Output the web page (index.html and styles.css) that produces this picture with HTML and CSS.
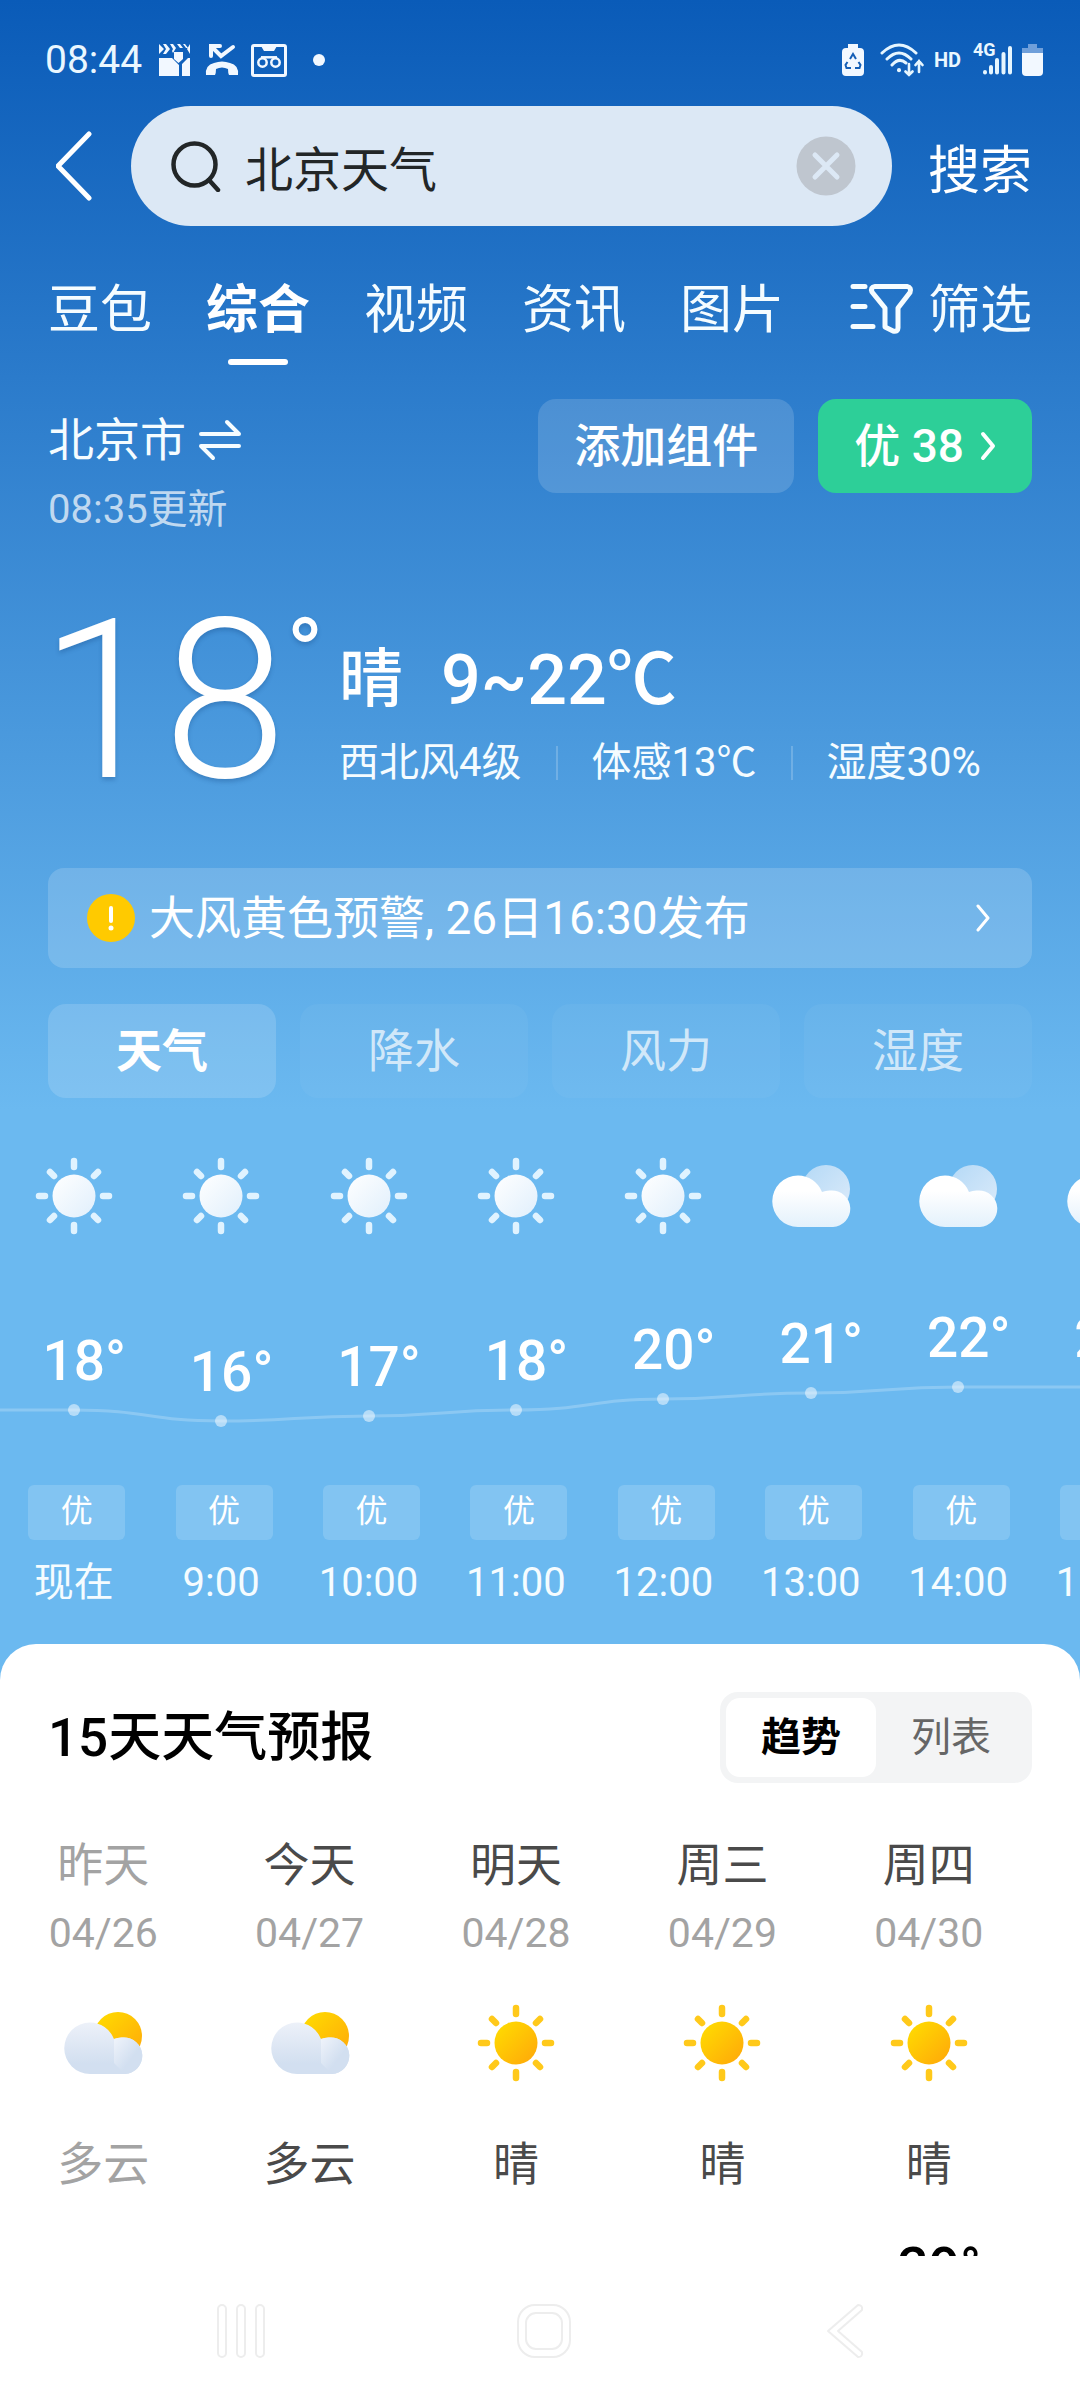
FILE: index.html
```html
<!DOCTYPE html>
<html lang="zh-CN">
<head>
<meta charset="utf-8">
<meta name="viewport" content="width=device-width, initial-scale=1">
<title>北京天气</title>
<link rel="stylesheet" href="styles.css">
</head>
<body>
<svg class="defs" aria-hidden="true">
  <defs>
    <linearGradient id="g-white" x1="0" y1="0" x2="1" y2="1"><stop offset="0" stop-color="#fff"/><stop offset="1" stop-color="#e0effc"/></linearGradient>
    <linearGradient id="g-cloud" x1="0" y1="0" x2="0" y2="1"><stop offset="0.3" stop-color="#fff"/><stop offset="1" stop-color="#e3f1fc"/></linearGradient>
    <linearGradient id="g-back" x1="0" y1="0" x2="1" y2="1"><stop offset="0" stop-color="#b4d9f6"/><stop offset="1" stop-color="#dcebfa"/></linearGradient>
    <linearGradient id="g-sun" x1="0" y1="0" x2="1" y2="1"><stop offset="0" stop-color="#ffdf00"/><stop offset="1" stop-color="#ffa60a"/></linearGradient>
    <linearGradient id="g-grey" x1="0" y1="0" x2="0" y2="1"><stop offset="0" stop-color="#edf1f9"/><stop offset="0.8" stop-color="#d2dff0"/></linearGradient>
    <linearGradient id="g-puff" x1="0" y1="0" x2="1" y2="1"><stop offset="0" stop-color="#f0f4fb"/><stop offset="0.6" stop-color="#d2dff0"/></linearGradient>
    <symbol id="sun" viewBox="0 0 80 80">
      <circle cx="40" cy="40" r="21.5" fill="var(--disc)"/>
      <g stroke="var(--ray)" stroke-width="6.5" stroke-linecap="round">
        <path d="M40 5v6M40 69v6M5 40h6M69 40h6M16 16l4 4M60 60l4 4M16 64l4-4M60 20l4-4"/>
      </g>
    </symbol>
    <symbol id="cloudy" viewBox="0 0 80 80">
      <circle cx="55" cy="33" r="24" fill="var(--disc)"/>
      <path d="M27 19.500A26 26 0 0 1 51 36A19 19 0 0 1 60 34.500A18 18 0 0 1 62 71H27A25.700 25.700 0 0 1 27 19.500Z" fill="var(--cloud)"/>
      <path d="M51 60V36A19 19 0 0 1 60 34.500A18 18 0 0 1 62 71Z" fill="var(--puff)"/>
    </symbol>
  </defs>
</svg>

<div class="screen">
  <div class="status">
    <time class="clock">08:44</time>
    <svg width="31" height="32" viewBox="0 0 31 32" fill="#f2f8ff"><path d="M0 14H13L20 21V32H0ZM31 14V32H23V20L29 14ZM15 8h9v7l-4.500 4L15 15ZM0 0l5 5-5 5ZM4 0h3l4 5-4 5H4l3-5ZM11 0h3l3 4-3 5-1-2 1-2ZM18 0h3l3 4h-3ZM24 0h2l3 4h-2ZM31 0v10l-3-5Z"/></svg>
    <svg class="call" width="34" height="32" viewBox="0 0 34 32" fill="none" stroke="#f2f8ff" stroke-linecap="round"><path d="M6 12V2h9M7 3l9 9L28 3" stroke-width="4"/><path d="M1 31Q0 21 9 19Q17 16 25 19Q34 21 33 31H24Q23 29 23 25Q17 22 11 25Q11 29 10 31Z" fill="#f2f8ff" stroke="none"/></svg>
    <svg width="36" height="33" viewBox="0 0 36 33" fill="none" stroke="#f2f8ff"><rect x="1.500" y="1.500" width="33" height="30" rx="1.500" stroke-width="3"/><path d="M10 2h16l-3 5H13Z" fill="#f2f8ff" stroke="none"/><g stroke-width="2.500"><circle cx="11.500" cy="18.500" r="4.200"/><circle cx="24.500" cy="18.500" r="4.200"/><path d="M10 13.300H26"/></g></svg>
    <span class="more-dot"></span>
    <div class="status-right">
      <svg width="22" height="33" viewBox="0 0 22 33"><path d="M6 0h10v4h2a4 4 0 0 1 4 4v20a4 4 0 0 1-4 4H4a4 4 0 0 1-4-4V8a4 4 0 0 1 4-4h2Z" fill="#f2f8ff"/><g fill="none" stroke="#155fb6" stroke-width="2"><path d="M8 15l3-5 3 5M5.500 18l-2 3 1 3H9M16.500 18l2 3-1 3H13"/></g></svg>
      <svg class="wifi" width="44" height="34" viewBox="0 0 44 34" fill="none" stroke="#e6f6ff" stroke-width="3" stroke-linecap="round"><path d="M2 10Q19-6 36 10M7 16Q19 4 31 16M12 22Q19 14 26 20"/><path d="M19 27v.2" stroke-width="4"/><path d="M29 21v11M25.500 28.500l3.500 3.500 3.500-3.500M39 29V18M35.500 22l3.500-4 3.500 4" stroke-width="2.600"/></svg>
      <span class="hd">HD</span>
      <span class="cell"><span class="gen">4G</span><svg width="30" height="30" viewBox="0 0 30 30" stroke="#e6f6ff" stroke-width="4" stroke-linecap="round"><path d="M3 27v.5M9 22v5.500M15 15v12.500M21.500 9v18.500M28 3v24.500"/></svg></span>
      <svg width="21" height="33" viewBox="0 0 21 33"><path d="M6 0h9v4h6v5H0V4h6Z" fill="#6f9fda"/><path d="M0 9H21V28a4 4 0 0 1-4 4H4a4 4 0 0 1-4-4Z" fill="#f2f8ff"/></svg>
    </div>
  </div>

  <form class="search" role="search">
    <button type="button" class="plain" aria-label="返回"><svg width="36" height="70" viewBox="0 0 36 70" fill="none" stroke="#fff" stroke-width="5" stroke-linecap="round" stroke-linejoin="round"><path d="M33 3 2 35 33 67"/></svg></button>
    <div class="search-box">
      <svg width="50" height="52" viewBox="0 0 50 52" fill="none" stroke="#222627" stroke-width="4.500" stroke-linecap="round"><circle cx="23.500" cy="24.500" r="21"/><path d="M38 40l9 10"/></svg>
      <input type="text" value="北京天气" aria-label="搜索">
      <button type="button" class="plain" aria-label="清除"><svg width="60" height="60" viewBox="0 0 60 60"><circle cx="30" cy="30" r="29.500" fill="#bfc6cf"/><path d="M19 19l22 22M41 19 19 41" stroke="#dce8f5" stroke-width="5" stroke-linecap="round"/></svg></button>
    </div>
    <button type="submit" class="plain go">搜索</button>
  </form>

  <nav class="tabs">
    <a href="#doubao">豆包</a>
    <a href="#all" class="on" aria-current="page">综合</a>
    <a href="#video">视频</a>
    <a href="#news">资讯</a>
    <a href="#images">图片</a>
    <button type="button" class="plain filter"><svg width="64" height="52" viewBox="0 0 64 52" fill="none" stroke="#f5fcff" stroke-width="5" stroke-linecap="round" stroke-linejoin="round"><path d="M3 3.500h12M3 23.500h12M3 43.500h20M25 3.500h32q5 1 3 6L48 25v20q0 4-5 3l-8-4V25L22 9q-2-5 3-5.500Z"/></svg>筛选</button>
  </nav>

  <section class="place">
    <div class="place-name">
      <a href="#city" class="city">北京市<svg width="44" height="42" viewBox="0 0 44 42" fill="none" stroke="#f5fcff" stroke-width="4" stroke-linecap="round" stroke-linejoin="round"><path d="M3 15H41L29 3M41 27H3L15 39"/></svg></a>
      <span class="updated">08:35更新</span>
    </div>
    <button type="button" class="chip">添加组件</button>
    <button type="button" class="chip good">优 38<svg width="16" height="30" viewBox="0 0 16 30" fill="none" stroke="#fff" stroke-width="4" stroke-linecap="round" stroke-linejoin="round"><path d="M3 3 13 15 3 27"/></svg></button>
  </section>

  <section class="now">
    <div class="now-temp">18<span class="now-deg">°</span></div>
    <div class="now-info">
      <p class="now-main"><span class="now-sky">晴</span><span>9~22℃</span></p>
      <p class="now-detail"><span>西北风4级</span><span>体感13℃</span><span>湿度30%</span></p>
    </div>
  </section>

  <a href="#alert" class="alert">
    <svg width="48" height="48" viewBox="0 0 48 48"><circle cx="24" cy="24" r="24" fill="#ffca00"/><path d="M24 14v13" stroke="#fff" stroke-width="4" stroke-linecap="round"/><circle cx="24" cy="34" r="2.500" fill="#fff"/></svg>
    <span>大风黄色预警, 26日16:30发布</span>
    <svg class="arrow" width="16" height="28" viewBox="0 0 16 28" fill="none" stroke="#fff" stroke-width="3" stroke-linecap="round" stroke-linejoin="round"><path d="M3 2 13 14 3 26"/></svg>
  </a>

  <div class="modes">
    <button type="button" class="mode on" aria-pressed="true">天气</button>
    <button type="button" class="mode">降水</button>
    <button type="button" class="mode">风力</button>
    <button type="button" class="mode">湿度</button>
  </div>

  <section class="hours">
    <svg class="curve" viewBox="0 0 1080 44" preserveAspectRatio="none" fill="none" stroke="#fff" stroke-opacity=".22" stroke-width="3"><path d="M0 28H74C148 28 148 39 221 39S295 34 369 34 442 28 516 28 590 17 663 17 737 11 811 11 884 5 958 5H1080"/></svg>
    <div class="hour"><svg class="sky"><use href="#sun"/></svg><div class="point" style="padding-top:23px"><span class="deg">18<i>°</i></span><b></b></div><span class="aqi">优</span><span class="at">现在</span></div>
    <div class="hour"><svg class="sky"><use href="#sun"/></svg><div class="point" style="padding-top:34px"><span class="deg">16<i>°</i></span><b></b></div><span class="aqi">优</span><span class="at">9:00</span></div>
    <div class="hour"><svg class="sky"><use href="#sun"/></svg><div class="point" style="padding-top:29px"><span class="deg">17<i>°</i></span><b></b></div><span class="aqi">优</span><span class="at">10:00</span></div>
    <div class="hour"><svg class="sky"><use href="#sun"/></svg><div class="point" style="padding-top:23px"><span class="deg">18<i>°</i></span><b></b></div><span class="aqi">优</span><span class="at">11:00</span></div>
    <div class="hour"><svg class="sky"><use href="#sun"/></svg><div class="point" style="padding-top:12px"><span class="deg">20<i>°</i></span><b></b></div><span class="aqi">优</span><span class="at">12:00</span></div>
    <div class="hour"><svg class="sky"><use href="#cloudy"/></svg><div class="point" style="padding-top:6px"><span class="deg">21<i>°</i></span><b></b></div><span class="aqi">优</span><span class="at">13:00</span></div>
    <div class="hour"><svg class="sky"><use href="#cloudy"/></svg><div class="point" style="padding-top:0px"><span class="deg">22<i>°</i></span><b></b></div><span class="aqi">优</span><span class="at">14:00</span></div>
    <div class="hour"><svg class="sky"><use href="#cloudy"/></svg><div class="point" style="padding-top:0px"><span class="deg">22<i>°</i></span><b></b></div><span class="aqi">优</span><span class="at">15:00</span></div>
  </section>

  <section class="forecast">
    <div class="forecast-head">
      <h2>15天天气预报</h2>
      <div class="segment"><button type="button" class="on" aria-pressed="true">趋势</button><button type="button">列表</button></div>
    </div>
    <div class="days">
      <div class="day past"><span>昨天</span><span class="date">04/26</span><svg class="sky"><use href="#cloudy"/></svg><span>多云</span></div>
      <div class="day"><span>今天</span><span class="date">04/27</span><svg class="sky"><use href="#cloudy"/></svg><span>多云</span></div>
      <div class="day"><span>明天</span><span class="date">04/28</span><svg class="sky"><use href="#sun"/></svg><span>晴</span></div>
      <div class="day"><span>周三</span><span class="date">04/29</span><svg class="sky"><use href="#sun"/></svg><span>晴</span></div>
      <div class="day"><span>周四</span><span class="date">04/30</span><svg class="sky"><use href="#sun"/></svg><span>晴</span><span class="high">29<i>°</i></span></div>
    </div>
  </section>

  <div class="navbar">
    <button type="button" class="plain" aria-label="最近任务"><svg width="56" height="56" viewBox="0 0 56 56" fill="#fff" stroke="#ededed" stroke-width="2"><rect x="4" y="2" width="8" height="52" rx="4"/><rect x="23" y="2" width="8" height="52" rx="4"/><rect x="42" y="2" width="8" height="52" rx="4"/></svg></button>
    <button type="button" class="plain" aria-label="主屏幕"><svg width="56" height="56" viewBox="0 0 56 56" fill="#fff" stroke="#ededed" stroke-width="2"><rect x="2" y="2" width="52" height="52" rx="17"/><rect x="10" y="10" width="36" height="36" rx="10"/></svg></button>
    <button type="button" class="plain" aria-label="返回"><svg width="56" height="56" viewBox="0 0 56 56" fill="#fff" stroke="#ededed" stroke-width="2" stroke-linejoin="round"><path d="M40 2 10 28 40 54q5 0 4-5L20 28 44 7q1-5-4-5Z"/></svg></button>
  </div>
</div>
</body>
</html>
```
FILE: styles.css
```css
* { box-sizing: border-box; }

body {
  margin: 0;
  font-family: Roboto, "Noto Sans CJK SC", sans-serif;
  font-size: 46px;
  line-height: 56px;
  color: #fff;
}

p, h2 { margin: 0; }
i, b { font-style: normal; }
a { color: inherit; text-decoration: none; }
svg { display: block; flex: none; }
button { font: inherit; color: inherit; border: 0; padding: 0; white-space: nowrap; }
.plain { background: none; display: flex; align-items: center; }
.defs { position: absolute; width: 0; height: 0; }

.screen {
  min-height: 100vh;
  display: flex;
  flex-direction: column;
  overflow: hidden;
  background: linear-gradient(#0a5bb8, #6bb9f0 1110px);
}

/* status bar */
.status {
  display: flex;
  align-items: center;
  height: 106px;
  padding: 14px 37px 0 45px;
  color: #eaf7ff;
}
.clock { font-size: 39px; margin-right: 17px; }
.call { margin: 0 12px 0 15px; }
.more-dot { width: 12px; height: 12px; border-radius: 50%; background: #f2f8ff; margin-left: 26px; }
.status-right { display: flex; align-items: center; margin-left: auto; }
.wifi { margin: 0 10px 0 16px; }
.hd { font-size: 20px; font-weight: 700; margin-right: 12px; }
.cell { position: relative; padding-left: 9px; margin-right: 10px; }
.gen { position: absolute; left: 0; top: -5px; font-size: 18px; line-height: 20px; font-weight: 700; }

/* search row */
.search { display: flex; align-items: center; padding: 0 48px 0 56px; }
.search-box {
  flex: 1;
  min-width: 0;
  display: flex;
  align-items: center;
  height: 120px;
  margin: 0 36px 0 39px;
  padding: 0 36px 0 40px;
  border-radius: 60px;
  background: #dce8f5;
}
.search-box input {
  flex: 1;
  min-width: 0;
  height: 80px;
  padding: 0 0 0 24px;
  border: 0;
  background: none;
  font: inherit;
  font-size: 48px;
  color: #222627;
}
.go, .tabs { font-size: 52px; }
.go { flex: none; padding-top: 12px; }

/* result tabs */
.tabs {
  display: flex;
  gap: 54px;
  padding: 47px 48px 0;
  line-height: 76px;
  color: #f5fcff;
}
.tabs a { white-space: nowrap; }
.tabs .on { font-weight: 700; color: #fff; }
.tabs .on::after {
  content: "";
  display: block;
  width: 60px;
  height: 6px;
  margin: 10px auto 0;
  border-radius: 3px;
  background: #fff;
}
.filter { margin-left: auto; height: 76px; gap: 14px; }
.filter svg { margin-bottom: 4px; }

/* location row */
.place { display: flex; align-items: flex-start; gap: 24px; padding: 34px 48px 0; height: 174px; }
.place-name { flex: 1; display: flex; flex-direction: column; gap: 14px; padding-top: 13px; }
.city { display: flex; align-items: center; gap: 12px; color: #f5fcff; }
.updated { font-size: 40px; color: rgba(255, 255, 255, .7); }
.chip {
  display: flex;
  align-items: center;
  height: 94px;
  padding: 0 36px;
  border-radius: 18px;
  font-weight: 500;
  background: rgba(255, 255, 255, .15);
}
.good { gap: 16px; background: #2dcf98; }

/* current weather */
.now { display: flex; padding: 32px 48px 0 40px; height: 329px; }
.now-temp {
  display: flex;
  font-size: 222px;
  line-height: 260px;
  font-weight: 300;
  width: 299px;
  text-shadow: 0 3px 4px rgba(20, 70, 130, .3);
}
.now-deg { font-size: 100px; line-height: 168px; font-weight: 400; }
.now-info { padding-top: 67px; }
.now-main { display: flex; align-items: center; gap: 38px; font-size: 70px; line-height: 84px; font-weight: 500; }
.now-sky { font-size: 64px; }
.now-detail { display: flex; align-items: center; padding-top: 13px; font-size: 40px; color: #f5fcff; white-space: nowrap; }
.now-detail span + span { margin-left: 35px; }
.now-detail span + span::before {
  content: "";
  display: inline-block;
  width: 2px;
  height: 34px;
  margin-right: 33px;
  vertical-align: -4px;
  background: rgba(255, 255, 255, .2);
}

/* warning */
.alert {
  display: flex;
  align-items: center;
  gap: 14px;
  height: 100px;
  margin: 0 48px;
  padding: 0 41px 0 39px;
  border-radius: 16px;
  background: rgba(255, 255, 255, .16);
}
.arrow { margin-left: auto; }

/* chart modes */
.modes { display: grid; grid-template-columns: repeat(4, 1fr); gap: 24px; padding: 36px 48px 0; }
.mode { height: 94px; border-radius: 18px; background: rgba(255, 255, 255, .04); color: rgba(255, 255, 255, .7); }
.mode.on { background: rgba(255, 255, 255, .15); color: #fff; font-weight: 700; }

/* hourly strip */
.hours { position: relative; display: flex; height: 546px; padding-top: 58px; --disc: url(#g-white); --ray: #e0f3ff; --cloud: url(#g-cloud); --puff: none; }
.hours .sky + .point { margin-top: 70px; }
.curve { position: absolute; left: 0; top: 284px; width: 100%; height: 44px; }
.hour { flex: 0 0 13.650%; display: flex; flex-direction: column; align-items: center; }
.hours .sky:has([href="#cloudy"]) { --disc: url(#g-back); }
.sky { width: 80px; height: 80px; }
.point { display: flex; flex-direction: column; align-items: center; height: 179px; }
.deg, .high { position: relative; font-size: 55px; line-height: 64px; font-weight: 500; }
.deg i, .high i { position: absolute; left: 100%; top: 0; }
.point b { flex: none; width: 12px; height: 12px; margin-top: 11px; border-radius: 50%; background: #b5dcf8; }
.aqi {
  width: 97px;
  height: 55px;
  margin-left: 6px;
  border-radius: 6px;
  background: rgba(255, 255, 255, .16);
  font-size: 32px;
  line-height: 52px;
  text-align: center;
}
.at { margin-top: 15px; font-size: 40px; color: #f5fcff; }

/* 15-day forecast */
.forecast {
  flex: 1 0 612px;
  height: 612px;
  overflow: hidden;
  border-radius: 36px 36px 0 0;
  background: #fff;
  color: #4a4a4a;
}
.forecast-head { display: flex; align-items: center; justify-content: space-between; padding: 48px 48px 0; }
.forecast h2 { font-size: 53px; line-height: 76px; font-weight: 500; color: #000; }
.segment { display: flex; padding: 6px; border-radius: 18px; background: #f3f4f5; font-size: 40px; color: #666; }
.segment button { width: 150px; height: 79px; border-radius: 14px; background: none; }
.segment .on { background: #fff; color: #000; font-weight: 700; }
.days { display: grid; grid-template-columns: repeat(5, 1fr); padding: 54px 48px 0 0; }
.day { display: flex; flex-direction: column; align-items: center; --disc: url(#g-sun); --ray: #ffc91a; --cloud: url(#g-grey); --puff: url(#g-puff); }
.date { margin-top: 12px; font-size: 41px; color: #a3a3a3; }
.day .sky { margin: 42px 0 53px; }
.past { color: #a3a3a3; }
.high { margin-top: 44px; color: #000; }

/* system navigation */
.navbar {
  display: grid;
  grid-template-columns: repeat(3, 302px);
  justify-content: center;
  justify-items: center;
  align-items: center;
  height: 144px;
  padding: 6px 0 0 8px;
  background: #fff;
}
```
